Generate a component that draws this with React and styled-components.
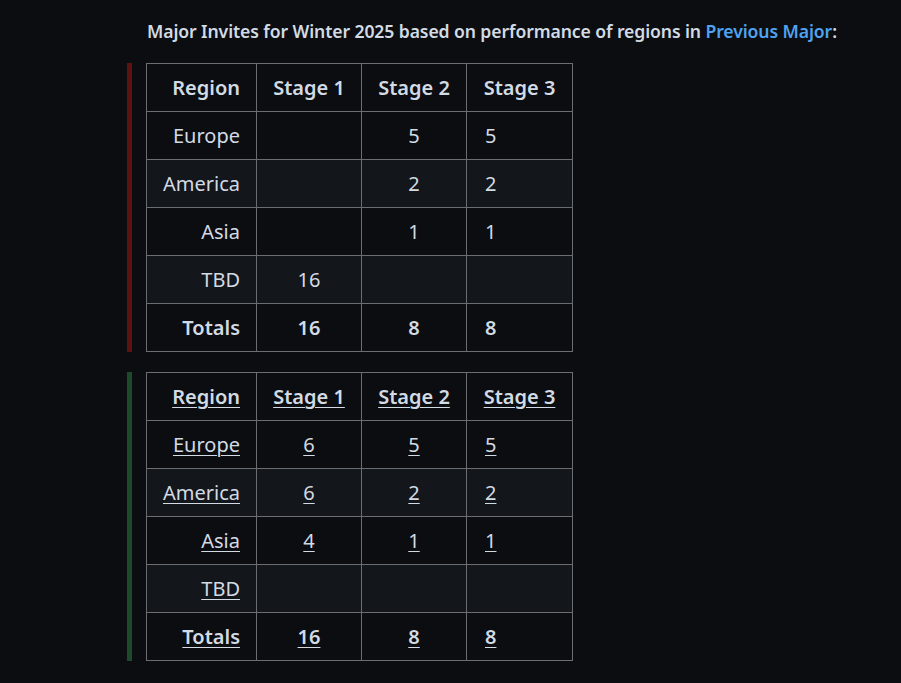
import React from 'react';
import styled, { createGlobalStyle } from 'styled-components';

const GlobalStyle = createGlobalStyle`
  html, body {
    margin: 0;
    padding: 0;
    background: #0b0d10;
  }
  body {
    font-family: "Noto Sans", "Open Sans", sans-serif;
    color: #d2dbe4;
  }
`;

const tables = [
  {
    accent: '#5e1212',
    linked: false,
    rows: [
      ['Europe', '', '5', '5'],
      ['America', '', '2', '2'],
      ['Asia', '', '1', '1'],
      ['TBD', '16', '', ''],
    ],
    totals: ['Totals', '16', '8', '8'],
  },
  {
    accent: '#1d4a2b',
    linked: true,
    rows: [
      ['Europe', '6', '5', '5'],
      ['America', '6', '2', '2'],
      ['Asia', '4', '1', '1'],
      ['TBD', '', '', ''],
    ],
    totals: ['Totals', '16', '8', '8'],
  },
];

const headers = ['Region', 'Stage 1', 'Stage 2', 'Stage 3'];

const Page = styled.main`
  padding: 17px 0 20px 146px;
`;

const Intro = styled.p`
  margin: 0 0 18px 1px;
  font-size: 17.6px;
  font-weight: 600;
  line-height: 28px;
  letter-spacing: -0.1px;
`;

const Link = styled.a`
  color: #4fa3ef;
  text-decoration: none;
`;

const Block = styled.section`
  position: relative;
  margin-bottom: 20px;
  width: max-content;

  &::before {
    content: '';
    position: absolute;
    left: -19px;
    top: 0;
    bottom: 0;
    width: 5px;
    background: ${({ $accent }) => $accent};
  }
`;

const Table = styled.table`
  border-collapse: collapse;
  font-size: 20px;
  line-height: 26px;
`;

const Row = styled.tr`
  background: ${({ $alt }) => ($alt ? '#13161b' : '#0b0d10')};
`;

const Cell = styled.td`
  border: 1px solid #6a6d72;
  height: 48px;
  padding: 0 8px;
  box-sizing: border-box;
  white-space: nowrap;
  font-weight: ${({ $bold }) => ($bold ? 600 : 400)};
  text-decoration: ${({ $linked }) => ($linked ? 'underline' : 'none')};
  text-underline-offset: 3px;
  text-decoration-thickness: 1px;

  &:nth-child(1) { width: 110px; text-align: right; padding-right: 16px; }
  &:nth-child(2) { width: 105px; text-align: center; }
  &:nth-child(3) { width: 105px; text-align: center; }
  &:nth-child(4) { width: 106px; text-align: left; padding-left: 18px; }
`;

const HeadCell = styled(Cell).attrs({ as: 'th' })`
  font-weight: 600;
  &:nth-child(4) { text-align: center; padding-left: 8px; }
`;

const Invites = ({ data }) => (
  <Block $accent={data.accent}>
    <Table>
      <tbody>
        <Row>
          {headers.map((h) => (
            <HeadCell key={h} $linked={data.linked}>{h}</HeadCell>
          ))}
        </Row>
        {data.rows.map((r, i) => (
          <Row key={r[0]} $alt={i % 2 === 1}>
            {r.map((v, j) => (
              <Cell key={j} $linked={data.linked}>{v}</Cell>
            ))}
          </Row>
        ))}
        <Row>
          {data.totals.map((v, j) => (
            <Cell key={j} $bold $linked={data.linked}>{v}</Cell>
          ))}
        </Row>
      </tbody>
    </Table>
  </Block>
);

const App = () => (
  <>
    <GlobalStyle />
    <Page>
      <Intro>
        Major Invites for Winter 2025 based on performance of regions in{' '}
        <Link href="#">Previous Major</Link>:
      </Intro>
      {tables.map((t, i) => (
        <Invites key={i} data={t} />
      ))}
    </Page>
  </>
);

export default App;
